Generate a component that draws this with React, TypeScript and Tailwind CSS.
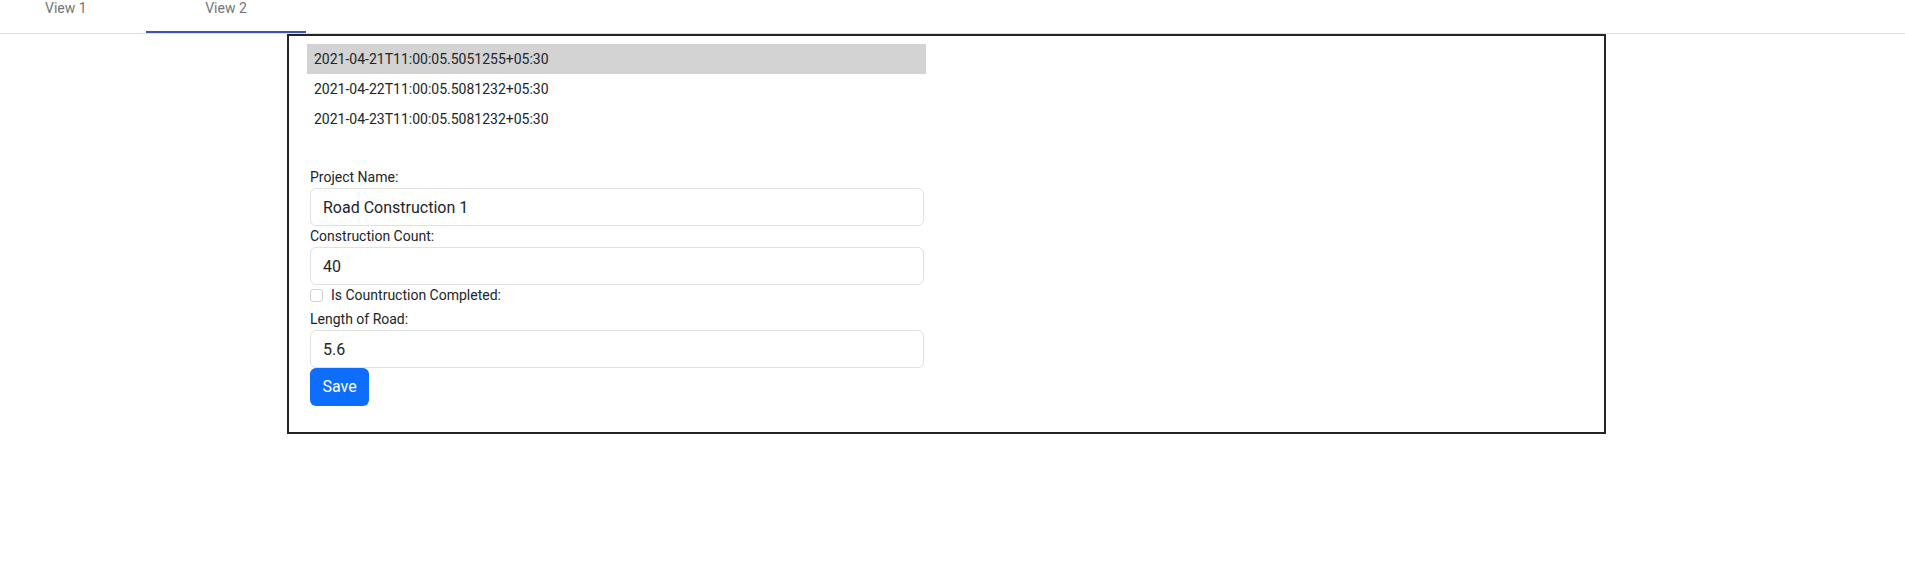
import React, { useState } from 'react';

const dates = [
  '2021-04-21T11:00:05.5051255+05:30',
  '2021-04-22T11:00:05.5081232+05:30',
  '2021-04-23T11:00:05.5081232+05:30',
];

const Field = ({ label, value }: { label: string; value: string }) => (
  <>
    <label className="h-[21px] text-[14px] leading-[21px] text-[#212529]">{label}</label>
    <input
      defaultValue={value}
      className="h-[38px] w-[614px] rounded-[6px] border border-[#dee2e6] px-3 text-[16px] text-[#212529] outline-none"
    />
  </>
);

const App = () => {
  const [selected, setSelected] = useState(0);

  return (
    <div className="min-h-[576px] bg-white font-['Roboto',sans-serif]">
      {/* tabs */}
      <div className="flex h-[34px] border-b border-[#e0e0e0]">
        <div className="h-[33px] w-[146px] pl-[45px] text-[14px] leading-[16px] text-[#757575]">View 1</div>
        <div className="h-[33px] w-[160px] border-b-2 border-[#3f51b5] text-center text-[14px] leading-[16px] text-[#757575]">
          View 2
        </div>
      </div>

      <div className="ml-[287px] w-[1319px] border-2 border-[#212529] pb-[26px]">
        <ul className="ml-[18px] mt-[8px] w-[619px]">
          {dates.map((d, i) => (
            <li
              key={d}
              onClick={() => setSelected(i)}
              className={`h-[30px] pl-[7px] text-[14px] leading-[30px] text-[#212529] ${
                selected === i ? 'bg-[#d3d3d3]' : ''
              }`}
            >
              {d}
            </li>
          ))}
        </ul>

        <form className="ml-[21px] mt-[33px] flex flex-col" onSubmit={(e) => e.preventDefault()}>
          <Field label="Project Name:" value="Road Construction 1" />
          <Field label="Construction Count:" value="40" />
          <div className="flex h-[24px] items-start">
            <input
              type="checkbox"
              className="mt-[4px] h-[13px] w-[13px] appearance-none rounded-[3px] border border-[#cfcfcf] bg-white"
            />
            <span className="ml-[8px] text-[14px] leading-[21px] text-[#212529]">Is Countruction Completed:</span>
          </div>
          <Field label="Length of Road:" value="5.6" />
          <button
            type="submit"
            className="h-[38px] w-[59px] rounded-[6px] bg-[#0d6efd] text-[16px] text-white"
          >
            Save
          </button>
        </form>
      </div>
    </div>
  );
};

export default App;
